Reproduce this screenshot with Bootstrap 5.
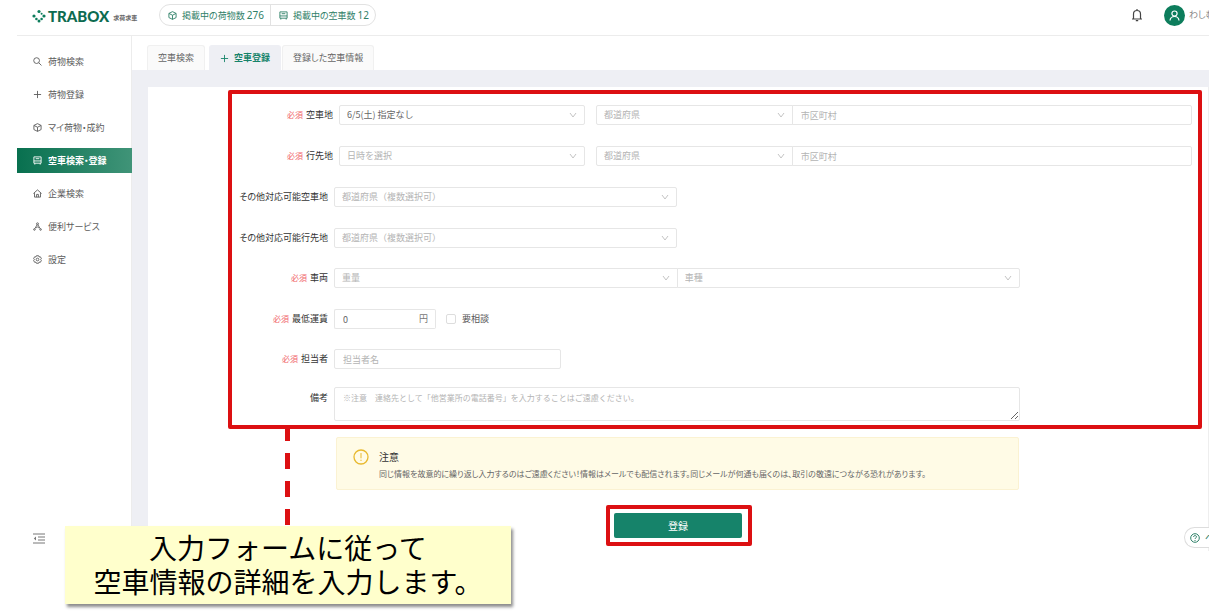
<!DOCTYPE html>
<html lang="ja">
<head>
<meta charset="utf-8">
<meta name="viewport" content="width=device-width, initial-scale=1">
<title>TRABOX 空車登録</title>
<link href="https://cdn.jsdelivr.net/npm/bootstrap@5.3.0/dist/css/bootstrap.min.css" rel="stylesheet">
<style>
:root{--green:#16836a;--red:#dc1012;--line:#e6e6e6;--hint:#b4b4b4}
body{font-family:"Noto Sans CJK JP","Noto Sans",sans-serif;font-feature-settings:"palt";font-size:9px;line-height:14px;color:#555;background:#fff;min-height:100vh}
svg{fill:none;stroke:currentColor;flex:none}
a{color:inherit;text-decoration:none}
.app-shell{margin:0 16px 0 17px}
.app-header{height:36px;border-bottom:1px solid #ececec;padding-left:15px;overflow:hidden}
.brand{width:127px;color:#0d6b50;gap:2px}
.brand-name{font:900 15px/20px Lato,sans-serif}
.brand-sub{font-size:6px;font-weight:700;color:#666;padding:4px 0 0 2px}
.stat-pill{border:1px solid #e2e2e2;border-radius:12px;height:22px;margin-bottom:5px;color:#2f8068}
.stat-pill a{padding:0 6px 0 8px;gap:5px;height:20px}
.stat-pill a+a{border-left:1px solid #e2e2e2}
.num{font:10px/14px "Noto Sans",sans-serif}
.user-area{gap:21px;margin-bottom:5px;color:#444;height:22px}
.avatar{width:21px;height:21px;background:#0d7d5c;color:#fff}
.user-name{width:20px;overflow:hidden;white-space:nowrap;color:#888}
.side-menu{width:115px;flex:none;border-right:1px solid #ececec;padding-top:13px}
.side-menu .nav-link{height:25px;margin-bottom:8px;padding:0 0 0 16px;gap:6px;color:#5c5c5c;font-size:9px}
.side-menu .nav-link.active{background:linear-gradient(90deg,#08704f,#409478);color:#fff;font-weight:700;margin-right:-1px}
.collapse-btn{padding:0 0 0 16px;margin-bottom:7px;color:#777}
.tab-bar{padding:9px 0 0 15px;border:0;gap:1px}
.tab-bar .nav-link{height:25px;padding:0 10px;border:1px solid #f0f0f0;border-bottom:0;border-radius:3px 3px 0 0;background:#fafafa;color:#666;font-size:9px;margin:0;gap:5px}
.tab-bar .nav-item:first-child{margin-right:3px}
.tab-bar .nav-link.active{background:#eeeff4;border-color:#eeeff4;color:var(--green);font-weight:700}
.content-col{min-width:0}
.main-area{background:#eeeff4;padding:17px 0 0 16px}
.panel{background:#fff;border-right:1px solid #eee;padding:3px 6px 5px 80px}
.mark-frame{border:4px solid var(--red);border-radius:2px}
.form-frame{padding:11px 6px 4px 0}
.field{min-height:20px;margin-bottom:21px;gap:6px}
.field.tight{margin-bottom:20px}
.field.snug{margin-bottom:18px}
.field.last{margin-bottom:0}
.field-label{width:96px;flex:none;text-align:right;color:#333;white-space:nowrap}
.field.wide .field-label{width:101px}
.req{color:#f0656a;margin-right:3px;font-size:8px}
.form-control,.form-select{height:20px;min-height:0;padding:0 8px;border:1px solid var(--line);border-radius:2px;font-size:9px;line-height:18px;color:#666;background-color:#fff}
.form-select{background-image:url("data:image/svg+xml,%3Csvg xmlns='http://www.w3.org/2000/svg' viewBox='0 0 8 8'%3E%3Cpath d='M1 2l3 4 3-4' fill='none' stroke='%23c4c4c4'/%3E%3C/svg%3E");background-size:8px 8px;background-position:right 7px center;padding:0 20px 0 7px}
.form-select.hint{color:var(--hint)}
.form-control::placeholder{color:var(--hint)}
.pair>:first-child{border-radius:2px 0 0 2px}
.pair>:last-child{border-radius:0 2px 2px 0;margin-left:-1px}
.w-date{width:246px;flex:none}
.w-place{flex:1;margin-left:5px}
.w-third{width:33%;flex:none}
.w-40{width:40%}.w-80{width:80%}.w-26{width:227px}
.field-body{flex:1;min-width:0}
.fare{width:102px}
.fare .form-control:first-child{border-right:0}
.fare .input-group-text{border:1px solid var(--line);border-left:0;border-radius:2px;background:#fff;font-size:9px;line-height:14px;padding:0 7px;color:#777}
.form-check-input{width:10px;height:10px;border-color:#ddd;border-radius:2px!important;margin:0;float:none}
.talk-check{gap:6px}
textarea.form-control{height:34px;line-height:14px;padding:3px 8px;font-size:8px;resize:vertical}
.notice{margin:8px 183px 0 108px;border:1px solid #fbf2d2;border-radius:2px;background:#fffbe6;padding:11px 0 8px 16px;gap:10px;color:#666}
.notice-title{font-size:10px;line-height:15px;color:#333;margin:0}
.notice-text{font-size:8px;line-height:14px;margin:3px 0 0}
.submit-frame{width:146px;padding:4px 6px 4px 4px;margin:15px 0 0 378px}
.btn-send{height:25px;background:#16836a;border:0;border-radius:2px;color:#fff;font-size:10px;line-height:14px;padding:0}
.dash-line{left:53px;top:calc(100% + 4px);color:var(--red)}
.help-pill{right:0;bottom:3px;width:25px;height:21px;border:1px solid #ddd;border-right:0;border-radius:11px 0 0 11px;background:#fff;color:#2f8068;overflow:hidden;padding-left:5px;gap:5px;white-space:nowrap}
.callout-note{left:65px;top:526px;width:446px;padding:4px 0 6px;background:#ffffcc;box-shadow:2px 3px 3px #8c8c8c;color:#000;font-size:28px;line-height:34px;font-feature-settings:normal;text-align:center;white-space:nowrap}
</style>
</head>
<body class="position-relative">
<div class="app-shell">
  <header class="app-header d-flex align-items-center">
    <a href="#" class="brand d-flex align-items-center mb-1">
      <svg width="14" height="14" viewBox="0 0 14 14" style="stroke:none"><g fill="#0d7d5c"><circle cx="7" cy="2.5" r="1.6"/><circle cx="2" cy="7" r="1.6"/><circle cx="12" cy="7" r="1.6"/><circle cx="4.4" cy="10" r="1.3"/><circle cx="9.6" cy="10" r="1.3"/><circle cx="7" cy="12" r="1.5"/><circle cx="9.6" cy="4.8" r="1"/></g></svg>
      <span class="brand-name">TRABOX</span><span class="brand-sub">求荷求車</span>
    </a>
    <div class="stat-pill d-flex">
      <a href="#" class="d-flex align-items-center"><svg width="9" height="9" viewBox="0 0 10 10"><path d="M5 .7l4 2v4.6l-4 2-4-2V2.700zM1 2.700l4 2 4-2M5 4.700v4.600"/></svg><span>掲載中の荷物数 <span class="num">276</span></span></a>
      <a href="#" class="d-flex align-items-center"><svg width="9" height="9" viewBox="0 0 10 10"><path d="M1 1h8v7H1zM1 5.500h8M3 3h4M2 8v1.500M8 8v1.500"/></svg><span>掲載中の空車数 <span class="num">12</span></span></a>
    </div>
    <div class="user-area d-flex align-items-center ms-auto">
      <svg width="12" height="14" viewBox="0 0 12 14" stroke-width="1.200"><path d="M1 11h10M2.500 11V6a3.500 3.500 0 0 1 7 0v5M6 1v1.500M4.800 12.600h2.400"/></svg>
      <a href="#" class="d-flex align-items-center gap-1"><span class="avatar rounded-circle d-flex align-items-center justify-content-center"><svg width="11" height="11" viewBox="0 0 11 11" stroke-width="1.200"><circle cx="5.500" cy="3.600" r="2.600"/><path d="M1 10.500c.3-2.500 2-4 4.500-4s4.200 1.500 4.500 4"/></svg></span><span class="user-name">わしむ</span></a>
    </div>
  </header>
  <div class="d-flex">
    <nav class="side-menu nav flex-column flex-nowrap">
      <a class="nav-link d-flex align-items-center" href="#"><svg width="9" height="9" viewBox="0 0 10 10"><circle cx="4" cy="4" r="3.200"/><path d="M6.400 6.400l3 3"/></svg>荷物検索</a>
      <a class="nav-link d-flex align-items-center" href="#"><svg width="9" height="9" viewBox="0 0 10 10"><path d="M5 1v8M1 5h8"/></svg>荷物登録</a>
      <a class="nav-link d-flex align-items-center" href="#"><svg width="9" height="9" viewBox="0 0 10 10"><path d="M5 .7l4 2v4.600l-4 2-4-2V2.700zM1 2.700l4 2 4-2M5 4.700v4.600"/></svg>マイ荷物・成約</a>
      <a class="nav-link d-flex align-items-center active" href="#"><svg width="9" height="9" viewBox="0 0 10 10"><path d="M1 1h8v7H1zM1 5.500h8M3 3h4M2 8v1.500M8 8v1.500"/></svg>空車検索・登録</a>
      <a class="nav-link d-flex align-items-center" href="#"><svg width="9" height="9" viewBox="0 0 10 10"><path d="M.5 5L5 1l4.500 4M1.700 4.500V9h6.600V4.500M4 9V6h2v3"/></svg>企業検索</a>
      <a class="nav-link d-flex align-items-center" href="#"><svg width="9" height="9" viewBox="0 0 10 10"><circle cx="5" cy="2" r="1.100"/><circle cx="1.600" cy="8.300" r=".9"/><circle cx="8.400" cy="8.300" r=".9"/><path d="M4.600 3L2 7.500M5.400 3L8 7.500M3.500 6.500L5 5.500l1.500 1"/></svg>便利サービス</a>
      <a class="nav-link d-flex align-items-center" href="#"><svg width="9" height="9" viewBox="0 0 10 10"><path d="M3.800.8h2.400l.5 1.300 1.500-.1 1.100 2-.8 1 .8 1.100-1.100 2-1.500-.2-.5 1.300H3.800l-.5-1.300-1.500.2-1.100-2 .8-1.100-.8-1 1.100-2 1.500.1z"/><circle cx="5" cy="5" r="1.500"/></svg>設定</a>
      <button type="button" class="collapse-btn btn border-0 d-flex mt-auto" aria-label="メニューを閉じる"><svg width="12" height="11" viewBox="0 0 12 11"><path d="M0 1h12M5 4h7M5 7h7M0 10h12"/><path d="M3 3.500L.8 5.500 3 7.500z" fill="currentColor" stroke="none"/></svg></button>
    </nav>
    <div class="content-col flex-grow-1 position-relative">
      <ul class="nav nav-tabs tab-bar">
        <li class="nav-item"><a class="nav-link d-flex align-items-center" href="#">空車検索</a></li>
        <li class="nav-item"><a class="nav-link active d-flex align-items-center" href="#"><svg width="9" height="9" viewBox="0 0 10 10"><path d="M5 1v8M1 5h8"/></svg>空車登録</a></li>
        <li class="nav-item"><a class="nav-link d-flex align-items-center" href="#">登録した空車情報</a></li>
      </ul>
      <main class="main-area">
        <form class="panel">
          <div class="mark-frame form-frame position-relative">
            <div class="field wide d-flex align-items-center">
              <label class="field-label" for="fromDate"><span class="req">必須</span>空車地</label>
              <select id="fromDate" class="form-select w-date"><option>6/5(土) 指定なし</option></select>
              <div class="pair w-place d-flex">
                <select class="form-select hint w-third" aria-label="空車地の都道府県"><option>都道府県</option></select>
                <input class="form-control" placeholder="市区町村" aria-label="空車地の市区町村">
              </div>
            </div>
            <div class="field wide d-flex align-items-center">
              <label class="field-label" for="toDate"><span class="req">必須</span>行先地</label>
              <select id="toDate" class="form-select hint w-date"><option>日時を選択</option></select>
              <div class="pair w-place d-flex">
                <select class="form-select hint w-third" aria-label="行先地の都道府県"><option>都道府県</option></select>
                <input class="form-control" placeholder="市区町村" aria-label="行先地の市区町村">
              </div>
            </div>
            <div class="field d-flex align-items-center">
              <label class="field-label" for="otherFrom">その他対応可能空車地</label>
              <div class="field-body"><select id="otherFrom" class="form-select hint w-40"><option>都道府県（複数選択可）</option></select></div>
            </div>
            <div class="field tight d-flex align-items-center">
              <label class="field-label" for="otherTo">その他対応可能行先地</label>
              <div class="field-body"><select id="otherTo" class="form-select hint w-40"><option>都道府県（複数選択可）</option></select></div>
            </div>
            <div class="field d-flex align-items-center">
              <label class="field-label" for="weight"><span class="req">必須</span>車両</label>
              <div class="field-body"><div class="pair w-80 d-flex">
                <select id="weight" class="form-select hint"><option>重量</option></select>
                <select class="form-select hint" aria-label="車種"><option>車種</option></select>
              </div></div>
            </div>
            <div class="field tight d-flex align-items-center">
              <label class="field-label" for="fare"><span class="req">必須</span>最低運賃</label>
              <div class="input-group fare flex-nowrap"><input id="fare" class="form-control" value="0"><span class="input-group-text">円</span></div>
              <div class="talk-check d-flex align-items-center ms-1"><input class="form-check-input" type="checkbox" id="talk"><label for="talk">要相談</label></div>
            </div>
            <div class="field snug d-flex align-items-center">
              <label class="field-label" for="person"><span class="req">必須</span>担当者</label>
              <input id="person" class="form-control w-26" placeholder="担当者名">
            </div>
            <div class="field last d-flex align-items-start">
              <label class="field-label pt-1" for="memo">備考</label>
              <div class="field-body d-flex"><textarea id="memo" class="form-control w-80" placeholder="※注意　連絡先として「他営業所の電話番号」を入力することはご遠慮ください。"></textarea></div>
            </div>
            <svg class="dash-line position-absolute" width="5" height="96" viewBox="0 0 5 96"><path d="M2.500 0v96" stroke-width="5" stroke-dasharray="16 12" stroke-dashoffset="4"/></svg>
          </div>
          <div class="notice d-flex" role="alert">
            <svg width="16" height="16" viewBox="0 0 16 16" style="color:#e8b92f"><circle cx="8" cy="8" r="7" stroke-width="1.300"/><path d="M8 4v5.300M8 10.700V12"/></svg>
            <div><p class="notice-title">注意</p><p class="notice-text">同じ情報を故意的に繰り返し入力するのはご遠慮ください！情報はメールでも配信されます。同じメールが何通も届くのは、取引の敬遠につながる恐れがあります。</p></div>
          </div>
          <div class="mark-frame submit-frame"><button type="submit" class="btn btn-send w-100 d-block">登録</button></div>
        </form>
      </main>
      <a href="#" class="help-pill position-absolute d-flex align-items-center" aria-label="ヘルプ"><svg width="10" height="10" viewBox="0 0 10 10"><circle cx="5" cy="5" r="4.300"/><path d="M3.600 4c0-2 2.900-1.800 2.900-.2C6.500 5 5 4.900 5 6M5 7v1"/></svg>ヘ</a>
    </div>
  </div>
</div>
<aside class="callout-note position-absolute">入力フォームに従って<br>空車情報の詳細を入力します。</aside>
<script src="https://cdn.jsdelivr.net/npm/bootstrap@5.3.0/dist/js/bootstrap.bundle.min.js"></script>
</body>
</html>
